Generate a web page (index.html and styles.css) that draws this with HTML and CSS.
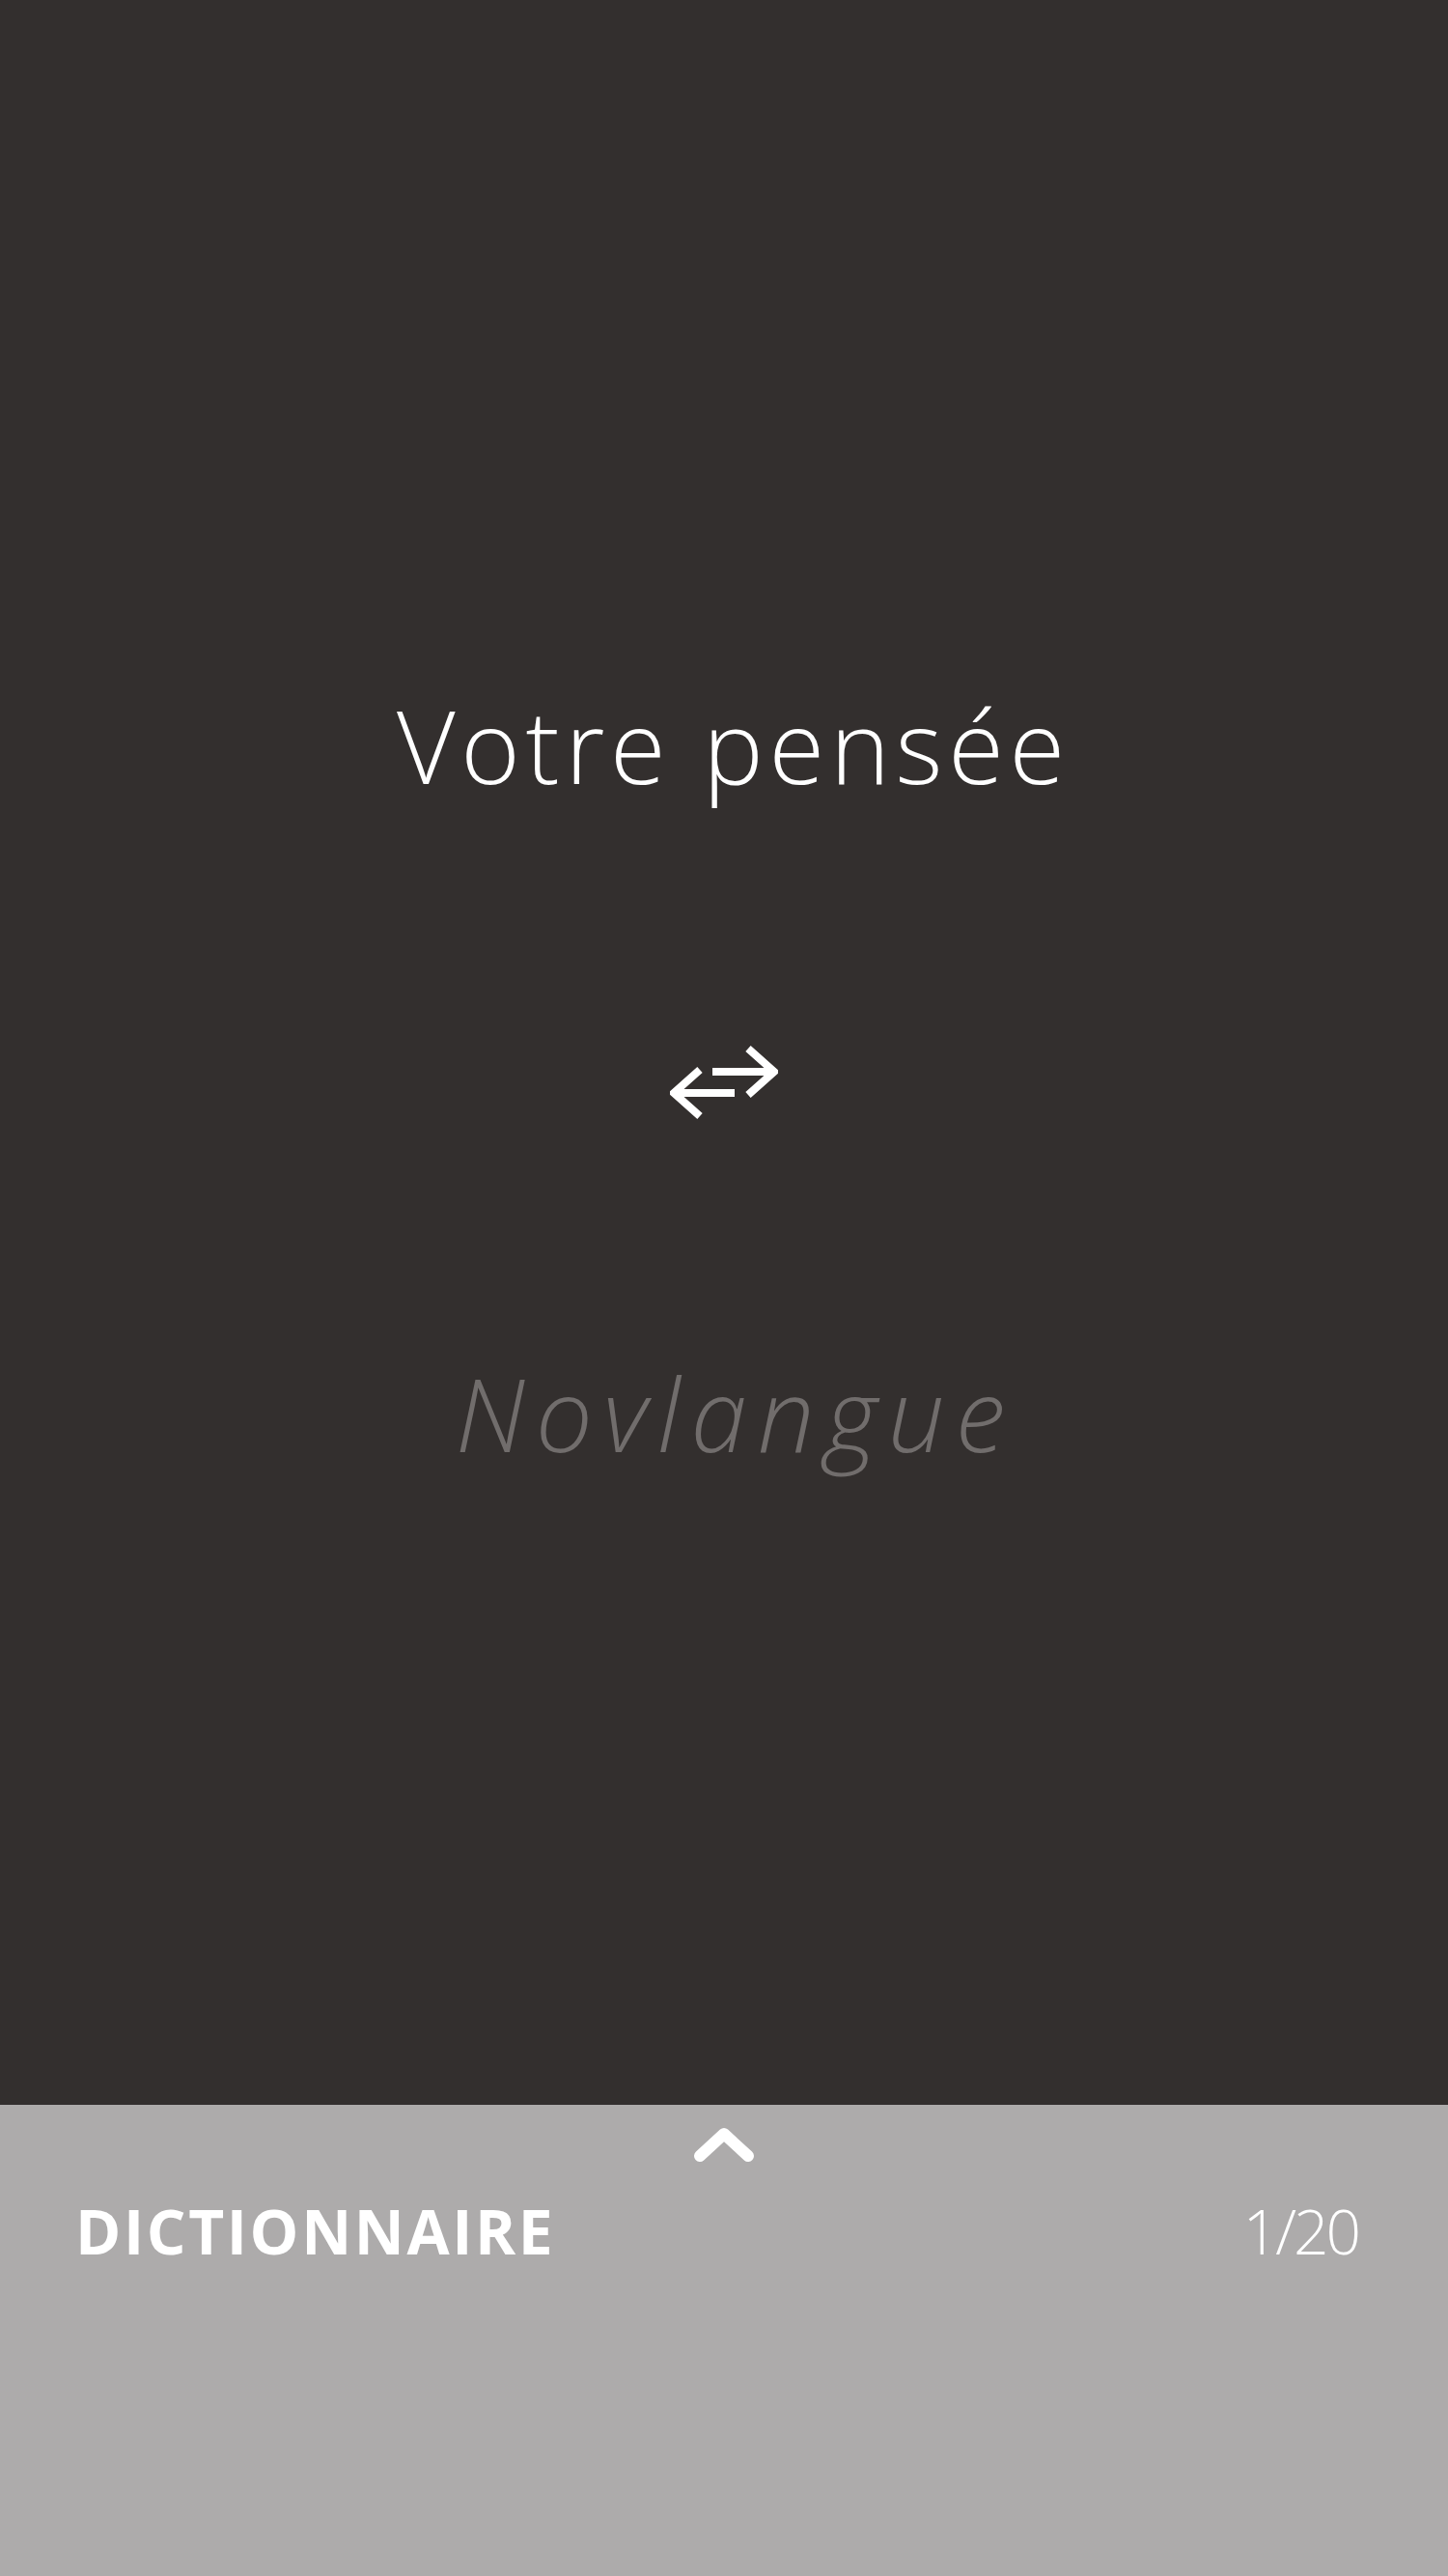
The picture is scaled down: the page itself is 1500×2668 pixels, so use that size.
FILE: index.html
```html
<!DOCTYPE html>
<html lang="fr">
<head>
<meta charset="utf-8">
<title>Novlangue</title>
<link rel="stylesheet" href="styles.css">
</head>
<body>
<div class="app">
  <main class="card">
    <h1 class="source">Votre pensée</h1>
    <svg class="swap" width="112" height="76" viewBox="0 0 112 76" aria-hidden="true">
      <g fill="none" stroke="#ffffff" stroke-width="8" stroke-linecap="butt" stroke-linejoin="miter">
        <path d="M44 27 H108"/>
        <path d="M81 3 L108 27 L81 51"/>
        <path d="M4 49 H67"/>
        <path d="M31 25 L4 49 L31 73"/>
      </g>
    </svg>
    <p class="target">Novlangue</p>
  </main>
  <section class="drawer">
    <svg class="chevron" width="80" height="52" viewBox="0 0 80 52" aria-hidden="true">
      <path d="M15 37 L40 14 L65 37" fill="none" stroke="#ffffff" stroke-width="12" stroke-linecap="round" stroke-linejoin="round"/>
    </svg>
    <div class="drawer-row">
      <span class="drawer-title">DICTIONNAIRE</span>
      <span class="drawer-count">1/20</span>
    </div>
  </section>
</div>
</body>
</html>
```
FILE: styles.css
```css
html, body {
  margin: 0;
  padding: 0;
}
body {
  width: 1500px;
  height: 2668px;
  background: #332f2e;
  font-family: "Open Sans", "Liberation Sans", sans-serif;
  overflow: hidden;
}
.app {
  display: flex;
  flex-direction: column;
  height: 2668px;
}
.card {
  height: 2180px;
  box-sizing: border-box;
  padding-top: 56px;
  background: #332f2e;
  display: flex;
  flex-direction: column;
  align-items: center;
  justify-content: center;
}
.source {
  margin: 0;
  padding-left: 20px;
  font-size: 105px;
  line-height: 120px;
  font-weight: 300;
  color: #ffffff;
  letter-spacing: 5.7px;
}
.swap {
  display: block;
  margin: 251px 0 245px;
}
.target {
  margin: 0;
  padding-left: 24px;
  font-size: 105px;
  line-height: 120px;
  font-weight: 300;
  font-style: italic;
  color: #716d6c;
  letter-spacing: 10.9px;
}
.drawer {
  flex: 1;
  background: #adabab;
  display: flex;
  flex-direction: column;
  align-items: center;
  padding-top: 16px;
}
.chevron {
  display: block;
}
.drawer-row {
  align-self: stretch;
  display: flex;
  justify-content: space-between;
  align-items: baseline;
  margin-top: 23px;
  padding: 0 93px 0 78px;
}
.drawer-title {
  font-size: 64px;
  line-height: 80px;
  font-weight: 700;
  color: #ffffff;
  letter-spacing: 2.6px;
}
.drawer-count {
  font-size: 64px;
  line-height: 80px;
  font-weight: 300;
  color: #ffffff;
  letter-spacing: -3px;
}
```
